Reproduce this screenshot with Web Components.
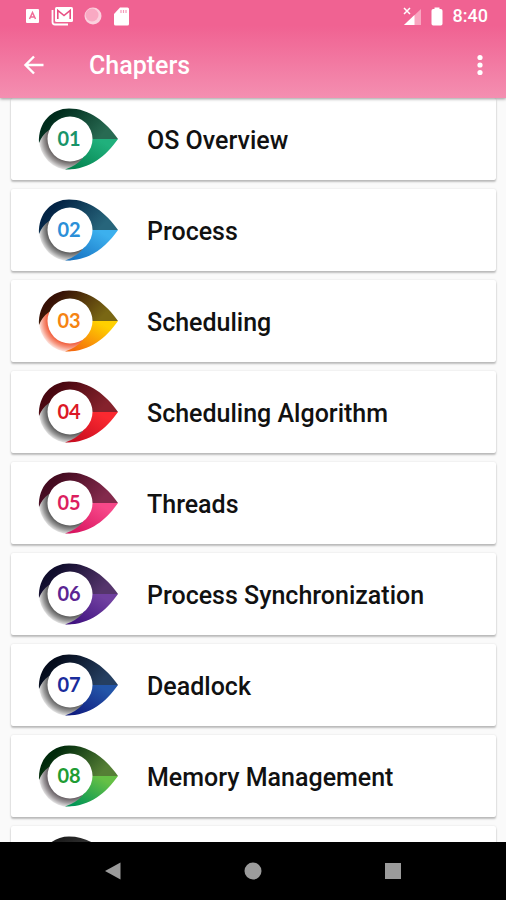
<!DOCTYPE html>
<html lang="en">
<head>
<meta charset="utf-8">
<meta name="viewport" content="width=device-width, initial-scale=1">
<title>Chapters</title>
<style>
  html, body { height: 100%; margin: 0; }
  body { background: #fafafa; font-family: Roboto, "Noto Sans", sans-serif; }
</style>
</head>
<body>
<chapters-screen></chapters-screen>
<script>
const define = (name, html, setup) => {
  const template = document.createElement('template');
  template.innerHTML = html;
  customElements.define(name, class extends HTMLElement {
    constructor() {
      super();
      this.attachShadow({ mode: 'open' }).append(template.content.cloneNode(true));
    }
    connectedCallback() { if (setup) setup(this, this.shadowRoot); }
  });
};

define('status-bar', `
<style>
  :host { display: flex; align-items: center; justify-content: space-between; height: 32px; padding: 0 18px 0 25px; color: #fff; font-size: 18px; line-height: 20px; font-weight: 500; }
  div { display: flex; align-items: center; }
  .left { gap: 11px; }
  .right { gap: 10px; }
  svg { display: block; }
</style>
<div class="left">
  <svg width="15" height="16" viewBox="0 0 15 16"><rect x="1" y="1" width="13" height="14" rx="1" fill="#fff"/><path d="M4.500 11 7.500 4.500 10.500 11M5.500 9h4" fill="none" stroke="#f06c98" stroke-width="1.500"/></svg>
  <svg width="22" height="20" viewBox="0 0 22 20"><path d="M1.500 4v12q0 2.500 2.500 2.500h13" fill="none" stroke="#fff" stroke-width="1.800"/><rect x="4" y="1" width="18" height="15" rx="1.500" fill="#fff"/><path d="M6.800 13V4.500l6.200 5 6.200-5V13" fill="none" stroke="#e84f83" stroke-width="1.600"/></svg>
  <svg width="18" height="18" viewBox="0 0 18 18"><circle cx="9" cy="9" r="8.500" fill="#fbd0de"/><circle cx="8" cy="8" r="6.500" fill="#f9a9c3"/></svg>
  <svg width="17" height="19" viewBox="0 0 17 19"><path d="M7 .5h7.500q1.500 0 1.500 1.500v15q0 1.500-1.500 1.500h-12Q1 18.500 1 17V7z" fill="#fff"/><path d="M8 3v3M10.500 3v3M13 3v3" stroke="#f59ab9" stroke-width="1.200"/></svg>
</div>
<div class="right">
  <svg width="18" height="19" viewBox="0 0 18 19"><path d="M18 2v16H1z" fill="#f9a5c0"/><path d="M11.500 8v10H1z" fill="#fff"/><path d="M1 1l6 6M7 1 1 7" stroke="#fff" stroke-width="1.500"/></svg>
  <svg width="12" height="19" viewBox="0 0 12 19"><path d="M3.500 2V.5h5V2h1.300q1.700 0 1.700 1.700v13.100q0 1.700-1.700 1.700H2.200Q.5 18.500.5 16.800V3.700Q.5 2 2.200 2z" fill="#fff"/></svg>
  <span>8:40</span>
</div>`);

define('app-bar', `
<style>
  :host { display: block; flex: none; position: relative; z-index: 1; background: linear-gradient(#f06292 26px, #f48fb1); box-shadow: 0 1px 3px #0006; color: #fff; }
  header { display: flex; align-items: center; height: 66px; padding: 0 9px 0 16px; }
  h1 { flex: 1; margin: 0 0 0 37px; padding-top: 2px; font-size: 25px; line-height: 32px; font-weight: 500; }
  button { display: grid; place-items: center; width: 36px; height: 40px; padding: 0; border: 0; background: none; color: inherit; }
  button:last-child { width: 34px; }
</style>
<status-bar></status-bar>
<header>
  <button aria-label="Back"><svg width="22" height="20" viewBox="0 0 22 20"><path d="M20.500 10H2.500M11 1.500 2.500 10l8.500 8.500" fill="none" stroke="#fff" stroke-width="2.400"/></svg></button>
  <h1><slot></slot></h1>
  <button aria-label="More options"><svg width="6" height="22" viewBox="0 0 6 22"><g fill="#fff"><circle cx="3" cy="3.500" r="2.600"/><circle cx="3" cy="11" r="2.600"/><circle cx="3" cy="18.500" r="2.600"/></g></svg></button>
</header>`);

define('chapter-badge', `
<style>
  :host { display: block; }
  svg { display: block; }
  text { font: 700 20px Lato, "Open Sans", sans-serif; }
</style>
<svg width="80" height="62" viewBox="0 0 80 62" aria-hidden="true">
  <defs>
    <linearGradient id="top" x1="0" y1=".3" x2="1" y2=".7"><stop offset=".15" stop-color="var(--dark)"/><stop offset=".85" stop-color="var(--mid)"/></linearGradient>
    <linearGradient id="low" x1="0" y1="1" x2="1" y2="0"><stop offset=".1" stop-color="var(--deep)"/><stop offset=".8" stop-color="var(--bright)"/></linearGradient>
    <radialGradient id="shade" gradientUnits="userSpaceOnUse" cx="32" cy="31" r="31"><stop offset=".74" stop-color="var(--shade)" stop-opacity=".9"/><stop offset=".86" stop-color="var(--shade)" stop-opacity=".6"/><stop offset="1" stop-color="var(--shade)" stop-opacity=".16"/></radialGradient>
  </defs>
  <path d="M1 31A31 31 0 0 0 32 62L46 52 32 31 10 20Z" fill="url(#shade)"/>
  <path d="M80 31C68 48 52 62 27 61.500Q38 58 45 50L32 31Z" fill="url(#low)"/>
  <path d="M1 35C0 14 14 .5 31 .5C52 .5 68 14 80 31H32L11 22Q4 27 1 35Z" fill="url(#top)"/>
  <circle cx="32" cy="31" r="22.500" fill="#fff"/>
  <text x="31" y="38" text-anchor="middle" fill="var(--ink)"></text>
</svg>`, (host, root) => {
  root.querySelector('text').textContent = host.getAttribute('number');
  const names = ['dark', 'mid', 'deep', 'bright', 'ink', 'shade'];
  host.getAttribute('colors').split(' ').forEach((c, i) => host.style.setProperty('--' + names[i], c));
});

define('chapter-card', `
<style>
  :host { display: block; }
  button { display: flex; align-items: center; gap: 29px; box-sizing: border-box; width: 100%; height: 82px; padding: 0 27px; border: 0; border-radius: 2px; background: #fff; box-shadow: 0 2px 2px #0000003d, 0 0 2px #0000001f; color: #111; font: 500 25px/32px Roboto, "Noto Sans", sans-serif; text-align: left; white-space: nowrap; }
  span { padding-top: 4px; }
</style>
<button><slot name="badge"></slot><span><slot></slot></span></button>`);

define('system-nav', `
<style>
  :host { display: flex; flex: none; justify-content: space-around; align-items: center; height: 58px; padding: 0 43px; background: #000; }
  button { display: grid; place-items: center; width: 48px; height: 48px; padding: 0; border: 0; background: none; }
</style>
<button aria-label="Back"><svg width="18" height="18" viewBox="0 0 18 18"><path d="M1 9 16.500.5v17z" fill="#9b9b9b"/></svg></button>
<button aria-label="Home"><svg width="18" height="18" viewBox="0 0 18 18"><circle cx="9" cy="9" r="8.500" fill="#9b9b9b"/></svg></button>
<button aria-label="Recent apps"><svg width="18" height="18" viewBox="0 0 18 18"><path d="M1 1h16v16H1z" fill="#9b9b9b"/></svg></button>`);

const chapters = [
  ['01', 'OS Overview', '#002c1c #286a52 #058450 #20b07c #189468 #5c5656'],
  ['02', 'Process', '#032445 #27657b #1875c4 #3cb0ee #2b8fd8 #505050'],
  ['03', 'Scheduling', '#361005 #796714 #f46b0e #ffd000 #f58412 #f0532f'],
  ['04', 'Scheduling Algorithm', '#480710 #85222c #c90d20 #fa2930 #dc1826 #505050'],
  ['05', 'Threads', '#440b20 #832a4c #d91560 #f74889 #dc1e60 #505050'],
  ['06', 'Process Synchronization', '#100d2c #55356c #401280 #7040a0 #5b2593 #505050'],
  ['07', 'Deadlock', '#050c1c #253f61 #101d80 #2355a8 #1a2c9c #5a5a5a'],
  ['08', 'Memory Management', '#002a0b #557f35 #009455 #65c045 #209c33 #5c5459'],
  ['', '', '#1c1c1c #444 #222 #555 #222 #777']
];
define('chapters-screen', `
<style>
  :host { display: flex; flex-direction: column; height: 100vh; }
  main { display: flex; flex: 1; flex-direction: column; gap: 9px; min-height: 0; overflow: hidden; padding: 0 10px 0 11px; }
  chapter-card { flex: none; }
</style>
<app-bar>Chapters</app-bar>
<main>${chapters.map(([number, title, colors]) => `<chapter-card><chapter-badge slot="badge" number="${number}" colors="${colors}"></chapter-badge>${title}</chapter-card>`).join('')}</main>
<system-nav></system-nav>`);
</script>
</body>
</html>
